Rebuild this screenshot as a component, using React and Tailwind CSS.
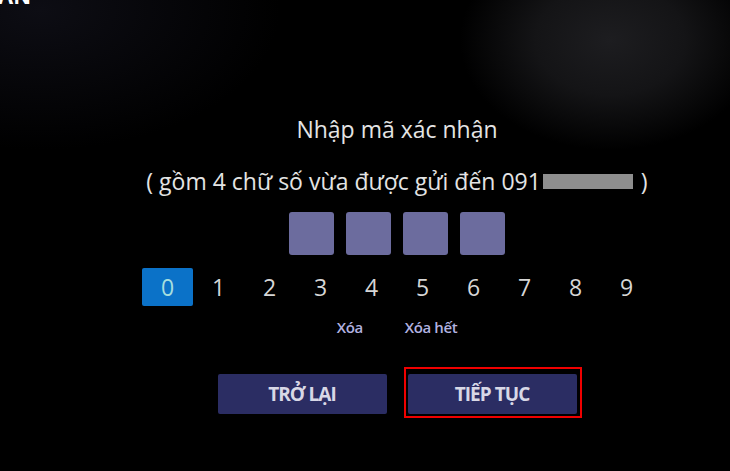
const digits = ["0", "1", "2", "3", "4", "5", "6", "7", "8", "9"];

const App = () => {
    return (
        <div
            className="relative w-[730px] h-[471px] overflow-hidden bg-black bg-[radial-gradient(ellipse_150px_110px_at_610px_40px,#1d1d20_0%,#141416_50%,transparent_100%),radial-gradient(ellipse_240px_140px_at_40px_10px,#0d0d14_0%,transparent_100%)]"
            style={{ fontFamily: '"Open Sans", "Noto Sans", sans-serif' }}
        >
            <div className="absolute left-[-2px] top-[-21px] text-[22px] font-bold text-white">AN</div>

            <div className="flex flex-col items-center pl-[64px] pt-[114px]">
                <h1 className="text-[23px] leading-[30px] text-[#e4e4e4]">Nhập mã xác nhận</h1>

                <p className="mt-[22px] flex items-center text-[23px] leading-[30px] text-[#e4e4e4]">
                    <span>( gồm 4 chữ số vừa được gửi đến 091</span>
                    <span className="inline-block w-[90px] h-[15px] ml-[2px] mr-[8px] bg-[#8e8e8e]" />
                    <span>)</span>
                </p>

                <div className="mt-[16px] flex gap-[12px]">
                    {[0, 1, 2, 3].map((i) => (
                        <div key={i} className="w-[45px] h-[43px] rounded-[3px] bg-[#6c6c9e]" />
                    ))}
                </div>

                <div className="mt-[13px] flex">
                    {digits.map((d, i) => (
                        <div
                            key={d}
                            className={`w-[51px] h-[38px] flex items-center justify-center text-[23px] rounded-[2px] ${
                                i === 0 ? "bg-[#0b72c8] text-[#a6dede]" : "text-[#d6d6d6]"
                            }`}
                        >
                            {d}
                        </div>
                    ))}
                </div>

                <div className="mt-[11px] flex gap-[42px] text-[15px] leading-[20px] font-semibold tracking-tight text-[#b2b2e0]">
                    <span>Xóa</span>
                    <span>Xóa hết</span>
                </div>

                <div className="mt-[37px] flex gap-[21px]">
                    <button className="w-[169px] h-[40px] rounded-[2px] bg-[#2b2d63] text-[19px] font-bold tracking-tighter text-[#d8d8e6]">
                        TRỞ LẠI
                    </button>
                    <div className="relative">
                        <button className="w-[169px] h-[40px] rounded-[2px] bg-[#2b2d63] text-[19px] font-bold tracking-tighter text-[#d8d8e6]">
                            TIẾP TỤC
                        </button>
                        <span className="absolute left-[-4px] right-[-5px] top-[-7px] bottom-[-4px] border-2 border-[#f00000]" />
                    </div>
                </div>
            </div>
        </div>
    );
};

export default App;
